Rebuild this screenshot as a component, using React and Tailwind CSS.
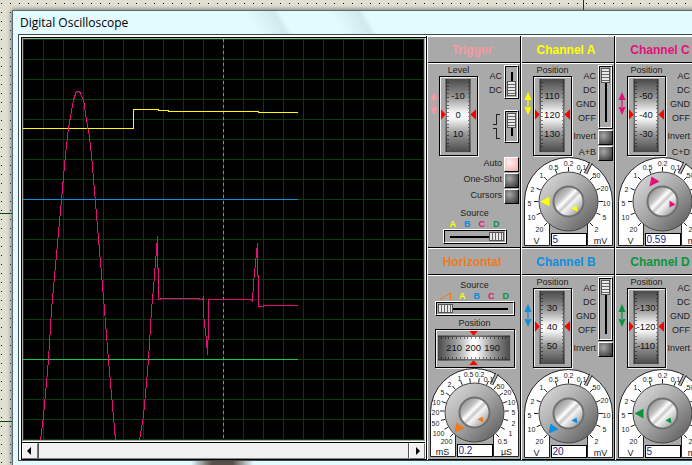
import React from 'react';

const YELLOW = '#ffff00';
const BLUE = '#0d8fe0';
const PINK = '#e0117b';
const GREEN = '#0a9440';
const ORANGE = '#ee7a1c';

const SOURCES = [
    { name: 'A', style: 'text-[#ffff00]' },
    { name: 'B', style: 'text-[#0d8fe0]' },
    { name: 'C', style: 'text-[#e0117b]' },
    { name: 'D', style: 'text-[#0a9440]' },
];

const VOLT_LABELS = [
    ['20', 15, 71], ['10', 7, 59], ['5', 5, 45], ['2', 8, 31], ['1', 17, 17],
    ['0.5', 29, 9], ['0.2', 44, 5], ['0.1', 57, 9], ['50', 72, 17], ['20', 80, 30],
    ['10', 82, 45], ['5', 80, 59], ['2', 72, 71],
];

const TIME_LABELS = [
    ['200', 16, 72], ['100', 8, 64], ['50', 5, 54], ['20', 5, 43], ['10', 6, 33],
    ['5', 12, 23], ['2', 19, 15], ['1', 29, 9], ['0.5', 38, 5], ['0.2', 49, 5],
    ['0.1', 58, 10], ['50', 70, 17], ['20', 77, 23], ['10', 81, 33], ['5', 83, 43],
    ['2', 83, 54], ['1', 80, 64], ['0.5', 72, 72],
];

const POINTERS = {
    left: '16,44 25,39 25,49',
    up: '33,19 41,24 31,29',
    low: '26,54 34,60 24,64',
};

const FINE_POINTERS = {
    low: '47,51 52,48 53,54',
    right: '51,43 57,47 51,50',
};

// 파형 표시 화면
function Screen() {
    const lines = Array.from({ length: 21 }, (_, i) => i * 20);

    return (
        <svg className="block bg-black" width="401" height="401" viewBox="23 39 401 401" shapeRendering="crispEdges" fill="none">
            <g fill="#033f06">
                {lines.map(p => <rect key={`v${p}`} x={23 + p} y="39" width="1" height="401" />)}
                {lines.map(p => <rect key={`h${p}`} x="23" y={39 + p} width="401" height="1" />)}
            </g>
            <path d="M223.500 39V440" stroke="#8c8c8c" strokeDasharray="3 3" />
            <path d="M23 199.500H298" stroke={BLUE} />
            <path d="M23 359.500H298" stroke="#10c848" />
            <path d="M23 128.500H133.500V109.500H158V110.500H168V111.500H258V112.500H298" stroke={YELLOW} />
            <path
                stroke={PINK}
                d="M40.500 440L43.500 416L48.500 360L51.500 310L65.500 155L68.500 128L73.500 100L76 92.500L77 91.500H79L80 92.500L83.500 100L86.500 120L89.500 137L91.500 155L104.500 310L108.500 360L115.500 440M139.500 440L143.500 416L148.500 360L151.500 310L153.500 287L156.500 250L157.500 236V268L158.500 268V299.500H160V298.500H199V299.500H202L203.500 297V315L206.500 340L207.500 355L208.500 326V299.500H251L252.500 301L253.500 283L256.500 253L257.500 243V275L258.500 275V306.500H263V305.500H298"
            />
        </svg>
    );
}

function ScrollButton({ label, path }) {
    return (
        <button aria-label={label} className="w-4 h-4 bg-[#f0f0f0] border border-white border-r-[#777] border-b-[#777] flex items-center justify-center">
            <svg width="8" height="8" viewBox="0 0 8 8"><path d={path} fill="#000" /></svg>
        </button>
    );
}

function Title({ style, children }) {
    return (
        <h2 className={`h-[27px] pr-1 border-t border-t-white border-b border-b-black flex items-center justify-center text-xs font-bold whitespace-nowrap ${style}`}>
            {children}
        </h2>
    );
}

function Marker({ color }) {
    return (
        <svg className="mt-[27px]" width="8" height="23" viewBox="0 0 8 23" fill={color}>
            <path d="M4 0L7.500 8H0.500ZM4 23L7.500 15H0.500ZM3.400 7H4.600V16H3.400Z" />
        </svg>
    );
}

function Wheel({ values }) {
    return (
        <svg className="border border-black shadow-[inset_1px_1px_0_#eee,1px_1px_0_#eee]" width="39" height="80" viewBox="0 0 39 80">
            <defs>
                <linearGradient id="wheelTall" x1="0" y1="0" x2="0" y2="1">
                    <stop offset="0" stopColor="#4a4a4a" />
                    <stop offset="0.25" stopColor="#979797" />
                    <stop offset="0.45" stopColor="#f4f4f4" />
                    <stop offset="0.5" stopColor="#ffffff" />
                    <stop offset="0.55" stopColor="#f4f4f4" />
                    <stop offset="0.75" stopColor="#979797" />
                    <stop offset="1" stopColor="#4a4a4a" />
                </linearGradient>
            </defs>
            <rect x="6" y="1" width="26" height="77" fill="url(#wheelTall)" />
            <path d="M6.500 1V78M31.500 1V78" stroke="#222" />
            {Array.from({ length: 18 }, (_, i) => (
                <path key={i} d={`M7 ${4.500 + i * 4}h2M31 ${4.500 + i * 4}h-2`} stroke="#000" strokeOpacity="0.5" shapeRendering="crispEdges" />
            ))}
            <path d="M1 33L6 38.500L1 44ZM38 33L32 38.500L38 44Z" fill="#f00" />
            <g fontSize="10" textAnchor="middle" fill="#111">
                {values.map((value, i) => <text key={value} x="19" y={22 + i * 20}>{value}</text>)}
            </g>
        </svg>
    );
}

function WideWheel({ values }) {
    return (
        <svg className="border border-black shadow-[inset_1px_1px_0_#eee,1px_1px_0_#eee]" width="80" height="39" viewBox="0 0 80 39">
            <defs>
                <linearGradient id="wheelWide">
                    <stop offset="0" stopColor="#4a4a4a" />
                    <stop offset="0.25" stopColor="#9c9c9c" />
                    <stop offset="0.45" stopColor="#f4f4f4" />
                    <stop offset="0.5" stopColor="#ffffff" />
                    <stop offset="0.55" stopColor="#f4f4f4" />
                    <stop offset="0.75" stopColor="#9c9c9c" />
                    <stop offset="1" stopColor="#4a4a4a" />
                </linearGradient>
            </defs>
            <rect x="1" y="6" width="76" height="26" fill="url(#wheelWide)" />
            <path d="M1 6.500H77M1 31.500H77" stroke="#222" />
            {Array.from({ length: 18 }, (_, i) => (
                <path key={i} d={`M${4.500 + i * 4} 7v3M${4.500 + i * 4} 31v-3`} stroke="#000" strokeOpacity="0.5" shapeRendering="crispEdges" />
            ))}
            <path d="M34 1H43L38.500 6ZM34 37H43L38.500 32Z" fill="#f00" />
            <g fontSize="10" textAnchor="middle" fill="#111">
                {values.map((value, i) => <text key={value} x={18 + i * 20} y="22">{value}</text>)}
            </g>
        </svg>
    );
}

// 세로 스위치 (AC/DC, 엣지 선택 등)
function VSwitch({ label, size, max, value }) {
    return (
        <div className={`w-[15px] ${size} border border-white border-r-black border-b-black`}>
            <div className="h-full border border-black border-r-white border-b-white flex justify-center py-px">
                <input
                    type="range"
                    aria-label={label}
                    min="0"
                    max={max}
                    defaultValue={value}
                    className="appearance-none [writing-mode:vertical-lr] w-[9px] h-full bg-[linear-gradient(#000,#000)] bg-[size:2px_calc(100%-8px)] bg-center bg-no-repeat [&::-webkit-slider-thumb]:appearance-none [&::-webkit-slider-thumb]:w-[9px] [&::-webkit-slider-thumb]:h-[15px] [&::-webkit-slider-thumb]:border [&::-webkit-slider-thumb]:border-[#555] [&::-webkit-slider-thumb]:bg-[repeating-linear-gradient(#e8e8e8_0_2px,#666_2px_3px)]"
                />
            </div>
        </div>
    );
}

function HSwitch({ label, size, max, value }) {
    return (
        <div className={`h-[15px] ${size} border border-white border-r-black border-b-black`}>
            <div className="h-full border border-black border-r-white border-b-white flex items-center px-px">
                <input
                    type="range"
                    aria-label={label}
                    min="0"
                    max={max}
                    defaultValue={value}
                    className="appearance-none w-full h-[9px] bg-[linear-gradient(#000,#000)] bg-[size:calc(100%-8px)_2px] bg-center bg-no-repeat [&::-webkit-slider-thumb]:appearance-none [&::-webkit-slider-thumb]:w-[15px] [&::-webkit-slider-thumb]:h-[9px] [&::-webkit-slider-thumb]:border [&::-webkit-slider-thumb]:border-[#555] [&::-webkit-slider-thumb]:bg-[repeating-linear-gradient(90deg,#e8e8e8_0_2px,#666_2px_3px)]"
                />
            </div>
        </div>
    );
}

function Toggle({ label, checked }) {
    return (
        <label className="flex justify-end items-center gap-0.5 h-4 whitespace-nowrap">
            {label}
            <input
                type="checkbox"
                defaultChecked={checked}
                className="appearance-none w-[15px] h-[15px] border border-white border-r-black border-b-black bg-[radial-gradient(circle_at_35%_35%,#a8a8a8,#2c2c2c)] checked:bg-[radial-gradient(circle_at_35%_35%,#fff0f0,#f5aaaa)]"
            />
        </label>
    );
}

function Dial({ name, color, labels, units, pointer, finePointer, value }) {
    const step = 270 / (labels.length - 1);

    return (
        <div className="grid w-[89px]">
            <svg className="col-start-1 row-start-1" width="89" height="89" viewBox="-0.5 -0.5 89 89">
                <defs>
                    <linearGradient id="knobOuter" x1="0.1" y1="0.1" x2="0.9" y2="0.9">
                        <stop offset="0" stopColor="#d6d6d6" />
                        <stop offset="0.5" stopColor="#a4a4a4" />
                        <stop offset="1" stopColor="#626262" />
                    </linearGradient>
                    <linearGradient id="knobInner" x1="0.1" y1="0.1" x2="0.9" y2="0.9">
                        <stop offset="0" stopColor="#8c8c8c" />
                        <stop offset="0.3" stopColor="#c4c4c4" />
                        <stop offset="0.42" stopColor="#ffffff" />
                        <stop offset="0.52" stopColor="#c9c9c9" />
                        <stop offset="0.6" stopColor="#f4f4f4" />
                        <stop offset="1" stopColor="#959595" />
                    </linearGradient>
                </defs>
                <path d="M0 88V44A44 44 0 0 1 88 44V88H63V66H25V88Z" fill="#fff" stroke="#222" />
                <path d="M25.500 88V62H62.500V88" fill="#a9a9a9" />
                <path d="M61 16L66.500 5" stroke="#222" strokeWidth="3.600" />
                <path d="M61 16L67 4" stroke="#b0b0b0" strokeWidth="1.800" />
                {labels.map((label, i) => {
                    const angle = ((225 - i * step) * Math.PI) / 180;
                    return (
                        <path
                            key={i}
                            d={`M${44 + 30 * Math.cos(angle)} ${44 - 30 * Math.sin(angle)}L${44 + 34.500 * Math.cos(angle)} ${44 - 34.500 * Math.sin(angle)}`}
                            stroke="#222"
                        />
                    );
                })}
                <circle cx="44" cy="44" r="29.500" fill="url(#knobOuter)" stroke="#444" />
                <circle cx="44" cy="44" r="15" fill="url(#knobInner)" stroke="#707070" strokeWidth="2" />
                <polygon points={POINTERS[pointer]} fill={color} />
                <polygon points={FINE_POINTERS[finePointer]} fill={color} />
                <g fontSize="7" textAnchor="middle" fill="#222">
                    {labels.map(([text, x, y], i) => <text key={i} x={x} y={y + 3}>{text}</text>)}
                </g>
                <g fontSize="9" textAnchor="middle" fill="#222">
                    <text x="12" y="86">{units[0]}</text>
                    <text x="76" y="86">{units[1]}</text>
                </g>
            </svg>
            <input
                aria-label={name}
                defaultValue={value}
                className="col-start-1 row-start-1 self-end justify-self-center w-9 h-[13px] px-px bg-white border border-black text-[10px] leading-none text-[#24248c]"
            />
        </div>
    );
}

function SourceLabels({ ramp }) {
    return (
        <div className="flex justify-center items-center gap-2 font-bold leading-[10px]">
            {ramp && (
                <svg width="11" height="8" viewBox="0 0 11 8" fill="none" stroke={ORANGE}><path d="M0 7.500L10.500 1V8" /></svg>
            )}
            {SOURCES.map(source => <span key={source.name} className={source.style}>{source.name}</span>)}
        </div>
    );
}

function TriggerPanel() {
    return (
        <section>
            <Title style="text-[#f59aa2]">Trigger</Title>
            <div className="h-[185px] border-t border-t-white border-b border-b-black pt-px pl-0.5 pr-px">
                <div className="flex justify-between">
                    <div className="flex gap-px">
                        <Marker color="#f59aa2" />
                        <div className="flex flex-col items-center leading-[11px]">
                            Level
                            <Wheel values={['-10', '0', '10']} />
                        </div>
                    </div>
                    <div className="flex flex-col gap-[11px]">
                        <div className="flex justify-end gap-0.5">
                            <div className="pt-1 text-right leading-[14px]">
                                <p>AC</p>
                                <p>DC</p>
                            </div>
                            <VSwitch label="Trigger coupling" size="h-[34px]" max="1" value="1" />
                        </div>
                        <div className="flex justify-end gap-[3px]">
                            <svg width="9" height="33" viewBox="0 0 9 33" fill="none" stroke="#222" shapeRendering="crispEdges">
                                <path d="M1 14.500H4.500V4.500H8M1 18.500H4.500V28.500H8" />
                            </svg>
                            <VSwitch label="Trigger edge" size="h-[33px]" max="1" value="0" />
                        </div>
                    </div>
                </div>
                <Toggle label="Auto" checked />
                <Toggle label="One-Shot" />
                <Toggle label="Cursors" />
                <div className="flex flex-col items-center pt-1">
                    <p className="leading-[11px]">Source</p>
                    <SourceLabels />
                    <HSwitch label="Trigger source" size="w-16" max="3" value="3" />
                </div>
            </div>
        </section>
    );
}

function HorizontalPanel() {
    return (
        <section>
            <Title style="text-[#ee7a1c]">Horizontal</Title>
            <div className="h-[185px] border-t border-t-white border-b border-b-black pt-1 pl-0.5 pr-px flex flex-col items-center">
                <p className="leading-[11px]">Source</p>
                <SourceLabels ramp />
                <HSwitch label="Horizontal source" size="w-20" max="4" value="0" />
                <p className="pt-0.5 leading-[11px]">Position</p>
                <WideWheel values={['210', '200', '190']} />
                <Dial name="Timebase" color={ORANGE} labels={TIME_LABELS} units={['mS', 'µS']} pointer="low" finePointer="low" value="0.2" />
            </div>
        </section>
    );
}

function ChannelPanel({ name, style, color, position, sum, pointer, finePointer = 'low', value }) {
    return (
        <section>
            <Title style={style}>{name}</Title>
            <div className="h-[185px] border-t border-t-white border-b border-b-black pt-px pl-0.5 pr-px">
                <div className="flex justify-between h-[92px]">
                    <div className="flex gap-px">
                        <Marker color={color} />
                        <div className="flex flex-col items-center leading-[11px]">
                            Position
                            <Wheel values={position} />
                        </div>
                    </div>
                    <div className="-ml-2">
                        <div className="flex justify-end gap-0.5">
                            <div className="pt-1 text-right leading-[14px]">
                                <p>AC</p>
                                <p>DC</p>
                                <p>GND</p>
                                <p>OFF</p>
                            </div>
                            <VSwitch label={`${name} coupling`} size="h-16" max="3" value="0" />
                        </div>
                        <Toggle label="Invert" />
                        {sum && <Toggle label={sum} />}
                    </div>
                </div>
                <Dial name={`${name} gain`} color={color} labels={VOLT_LABELS} units={['V', 'mV']} pointer={pointer} finePointer={finePointer} value={value} />
            </div>
        </section>
    );
}

function PanelColumn({ children }) {
    return <div className="w-[94px] shrink-0 border-l border-l-white border-r border-r-black bg-[#a9a9a9]">{children}</div>;
}

export default function App() {
    return (
        <div className="relative min-h-screen overflow-hidden pt-[10px] pl-3 bg-[#dfe0d1] bg-[radial-gradient(circle,#111_0.8px,transparent_1px)] bg-[size:9px_9px] bg-[position:-3px_-1px] font-['Liberation_Sans',Arial,sans-serif] text-[9px] text-[#222]">
            {/* 배경 도면의 배선 */}
            <svg className="absolute inset-0 w-full h-full" stroke="#0a400a" shapeRendering="crispEdges">
                <path d="M0 213.500H12M0 421.500H12M583.500 0V10" />
            </svg>

            <main className="relative w-max border-t border-l border-[#5c6b70] bg-[#e3faff] pl-[5px] shadow-[0_0_5px_#555]">
                <h1 className="h-[23px] pl-0.5 flex items-center font-['Open_Sans',sans-serif] text-xs text-black bg-[linear-gradient(60deg,transparent_34%,#d2e9ee_38%,transparent_39%,transparent_46%,#d2e9ee_50%,transparent_51%)]">
                    Digital Oscilloscope
                </h1>
                <div className="flex border border-[#3c4a4c] bg-white pt-px pl-px">
                    <div className="pt-px pl-px border-r border-black bg-white">
                        <div className="border-l border-t border-b border-black pr-px">
                            <div className="border border-[#a8a8a8]">
                                <Screen />
                            </div>
                            <div className="mt-px h-[17px] border-t border-black bg-[#f0f0f0] flex">
                                <ScrollButton label="Scroll left" path="M5 0V8L1 4Z" />
                                <div className="flex-1 border-l border-l-[#555] border-b border-b-[#888] border-r border-r-[#555]" />
                                <ScrollButton label="Scroll right" path="M3 0V8L7 4Z" />
                            </div>
                        </div>
                    </div>
                    <PanelColumn>
                        <TriggerPanel />
                        <HorizontalPanel />
                    </PanelColumn>
                    <PanelColumn>
                        <ChannelPanel name="Channel A" style="text-[#ffff00]" color={YELLOW} position={['110', '120', '130']} sum="A+B" pointer="left" value="5" />
                        <ChannelPanel name="Channel B" style="text-[#0d8fe0]" color={BLUE} position={['30', '40', '50']} pointer="low" value="20" />
                    </PanelColumn>
                    <PanelColumn>
                        <ChannelPanel name="Channel C" style="text-[#e0117b]" color={PINK} position={['-50', '-40', '-30']} sum="C+D" pointer="up" finePointer="right" value="0.59" />
                        <ChannelPanel name="Channel D" style="text-[#0a9440]" color={GREEN} position={['-130', '-120', '-110']} pointer="left" value="5" />
                    </PanelColumn>
                </div>
                <div className="h-[5px] bg-[linear-gradient(90deg,transparent_25%,#5a4f48_28%,#5a4f48_31%,transparent_34%)]" />
            </main>
        </div>
    );
}
